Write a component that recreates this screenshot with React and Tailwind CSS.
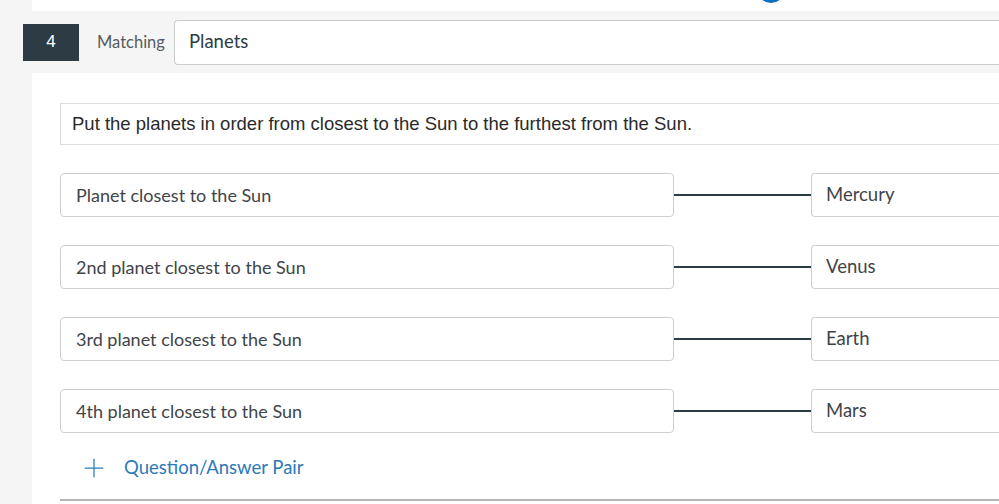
import { Plus } from 'lucide-react'

const pairs = [
  { q: 'Planet closest to the Sun', a: 'Mercury' },
  { q: '2nd planet closest to the Sun', a: 'Venus' },
  { q: '3rd planet closest to the Sun', a: 'Earth' },
  { q: '4th planet closest to the Sun', a: 'Mars' },
]

function PairRow({ q, a }) {
  return (
    <div className="flex items-center h-[44px]">
      <div className="w-[614px] h-full shrink-0 flex items-center pl-[15px] border border-[#cfcfcf] rounded-[4px] bg-white text-[18px] text-[#3f4448]">
        {q}
      </div>
      <div className="w-[137px] shrink-0 h-[2px] bg-[#2d3b45]" />
      <div className="flex-1 h-full flex items-center pl-[14px] border border-[#cfcfcf] rounded-l-[4px] border-r-0 bg-white text-[18.5px] text-[#3f4448]">
        {a}
      </div>
    </div>
  )
}

export default function App() {
  return (
    <div className="w-[999px] h-[504px] overflow-hidden bg-white flex flex-col" style={{ fontFamily: 'Lato, "Liberation Sans", sans-serif' }}>
      <div className="flex h-[11px] shrink-0">
        <div className="w-[32px] bg-[#f5f5f5]" />
        <div className="flex-1 relative bg-white">
          <div className="absolute left-[725px] top-[-25px] w-[28px] h-[28px] rounded-full bg-[#0b6fbf]" />
        </div>
      </div>

      <div className="h-[62px] shrink-0 bg-[#f5f5f5] flex items-center pl-[23px]">
        <div className="w-[56px] h-[37px] bg-[#2d3b45] text-white flex items-center justify-center text-[17px]" style={{ fontFamily: '"Liberation Sans", sans-serif' }}>
          4
        </div>
        <div className="w-[95px] pl-[18px] text-[16.5px] text-[#555b60]">Matching</div>
        <div className="flex-1 h-[45px] bg-white border border-[#cccccc] border-r-0 rounded-l-[4px] flex items-center pl-[14px] text-[18.5px] text-[#2d3b45]">
          Planets
        </div>
      </div>

      <div className="flex flex-1">
        <div className="w-[32px] shrink-0 bg-[#f5f5f5]" />
        <div className="flex-1 pl-[28px] pt-[30px] flex flex-col">
          <div
            className="h-[42px] border border-[#dddddd] border-r-0 flex items-center pl-[11px] text-[18.5px] text-[#2a2a2a] whitespace-nowrap"
            style={{ fontFamily: '"Liberation Sans", Arial, sans-serif' }}
          >
            Put the planets in order from closest to the Sun to the furthest from the Sun.
          </div>

          <div className="flex flex-col gap-[28px] mt-[28px]">
            {pairs.map((p) => (
              <PairRow key={p.q} {...p} />
            ))}
          </div>

          <div className="flex items-center h-[30px] mt-[20px] pl-[19px] text-[#2b7ab8]">
            <Plus size={30} strokeWidth={1} className="text-[#2b7ab8]" />
            <span className="ml-[15px] text-[18.5px]">Question/Answer Pair</span>
          </div>

          <div className="mt-[16px] h-[2px] bg-[#b5b5b5]" />
        </div>
      </div>
    </div>
  )
}
